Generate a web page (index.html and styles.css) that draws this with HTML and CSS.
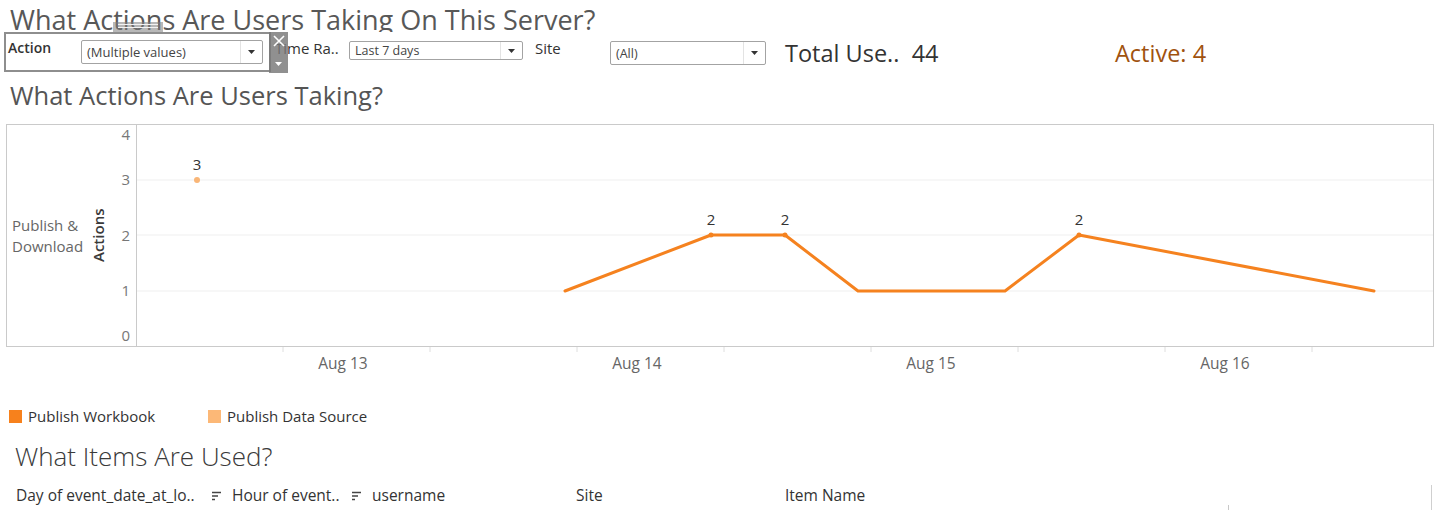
FILE: index.html
```html
<!DOCTYPE html>
<html>
<head>
<meta charset="utf-8">
<title>Server Actions</title>
<link rel="stylesheet" href="styles.css">
</head>
<body>
<div class="dash">
  <h1 class="title">What Actions Are Users Taking On This Server?</h1>

  <div class="filters">
    <div class="filter filter-action">
      <div class="grip"><span></span><span></span></div>
      <span class="flabel flabel-action">Action</span>
      <div class="dd dd-action">
        <span class="dd-text">(Multiple values)</span>
        <span class="dd-arrow"><svg width="7" height="4" viewBox="0 0 7 4"><path d="M0 0h7L3.5 4z" fill="#333"/></svg></span>
      </div>
      <div class="closebar">
        <svg class="close-x" width="12" height="12" viewBox="0 0 12 12"><path d="M1 1L11 11M11 1L1 11" stroke="#fff" stroke-width="1.6"/></svg>
        <svg class="close-down" width="7" height="4" viewBox="0 0 7 4"><path d="M0 0h7L3.5 4z" fill="#fff"/></svg>
      </div>
    </div>

    <div class="filter filter-time">
      <span class="flabel flabel-time">Time Ra..</span>
      <div class="dd dd-time">
        <span class="dd-text dd-text-sm">Last 7 days</span>
        <span class="dd-arrow"><svg width="7" height="4" viewBox="0 0 7 4"><path d="M0 0h7L3.5 4z" fill="#333"/></svg></span>
      </div>
    </div>

    <div class="filter filter-site">
      <span class="flabel flabel-site">Site</span>
      <div class="dd dd-site">
        <span class="dd-text dd-text-sm">(All)</span>
        <span class="dd-arrow"><svg width="7" height="4" viewBox="0 0 7 4"><path d="M0 0h7L3.5 4z" fill="#333"/></svg></span>
      </div>
    </div>

    <div class="kpi kpi-total">Total Use..  44</div>
    <div class="kpi kpi-active">Active: 4</div>
  </div>

  <h2 class="section">What Actions Are Users Taking?</h2>

  <div class="chart">
    <div class="chart-box">
      <div class="left-pane">
        <div class="rowhdr">Publish &amp;<br>Download</div>
        <div class="axistitle">Actions</div>
        <svg class="yaxis" width="28" height="221" viewBox="0 0 28 221">
          <g class="ytick">
            <text x="22" y="15" text-anchor="end">4</text>
            <text x="22" y="60" text-anchor="end">3</text>
            <text x="22" y="116" text-anchor="end">2</text>
            <text x="22" y="171" text-anchor="end">1</text>
            <text x="22" y="216" text-anchor="end">0</text>
          </g>
        </svg>
      </div>
      <svg class="plot" width="1296" height="221" viewBox="0 0 1296 221">
        <g stroke="#efefef" stroke-width="1">
          <line x1="0" y1="55" x2="1296" y2="55"/>
          <line x1="0" y1="110" x2="1296" y2="110"/>
          <line x1="0" y1="166" x2="1296" y2="166"/>
        </g>
        <polyline points="428,166 574,110 648,110 721,166 868,166 942,110 1237,166" fill="none" stroke="#f5821f" stroke-width="3" stroke-linejoin="round" stroke-linecap="round"/>
        <g fill="#f5821f">
          <circle cx="574" cy="110" r="2.5"/>
          <circle cx="648" cy="110" r="2.5"/>
          <circle cx="942" cy="110" r="2.5"/>
        </g>
        <circle cx="60" cy="55" r="3" fill="#f9b677"/>
        <g class="dlabel" text-anchor="middle">
          <text x="60" y="45">3</text>
          <text x="574" y="100">2</text>
          <text x="648" y="100">2</text>
          <text x="942" y="100">2</text>
        </g>
      </svg>
    </div>
    <svg class="xaxis" width="1428" height="33" viewBox="0 0 1428 33">
      <g stroke="#dedede" stroke-width="1">
        <line x1="277" y1="0" x2="277" y2="5"/>
        <line x1="424" y1="0" x2="424" y2="5"/>
        <line x1="571" y1="0" x2="571" y2="5"/>
        <line x1="718" y1="0" x2="718" y2="5"/>
        <line x1="865" y1="0" x2="865" y2="5"/>
        <line x1="1012" y1="0" x2="1012" y2="5"/>
        <line x1="1159" y1="0" x2="1159" y2="5"/>
        <line x1="1306" y1="0" x2="1306" y2="5"/>
      </g>
      <g class="xtick" text-anchor="middle">
        <text x="337" y="22">Aug 13</text>
        <text x="631" y="22">Aug 14</text>
        <text x="925" y="22">Aug 15</text>
        <text x="1219" y="22">Aug 16</text>
      </g>
    </svg>
  </div>

  <div class="legend">
    <div class="legend-item legend-item-first"><span class="swatch swatch-dark"></span>Publish Workbook</div>
    <div class="legend-item"><span class="swatch swatch-light"></span>Publish Data Source</div>
  </div>

  <h2 class="section section-items">What Items Are Used?</h2>

  <div class="table-hdr">
    <div class="th th-day">Day of event_date_at_lo..<span class="sort"><svg width="10" height="10" viewBox="0 0 10 10"><path d="M0 1.5h9M0 5h6M0 8.5h3" stroke="#444" stroke-width="1.3"/></svg></span></div>
    <div class="th th-hour">Hour of event..<span class="sort"><svg width="10" height="10" viewBox="0 0 10 10"><path d="M0 1.5h9M0 5h6M0 8.5h3" stroke="#444" stroke-width="1.3"/></svg></span></div>
    <div class="th th-user">username</div>
    <div class="th th-site">Site</div>
    <div class="th th-item">Item Name</div>
    <div class="th th-gap"></div>
  </div>
</div>
</body>
</html>
```

FILE: styles.css
```css
* { box-sizing: border-box; }

body {
  margin: 0;
  background: #fff;
  font-family: "Open Sans", Lato, sans-serif;
  color: #333;
}

.dash {
  width: 1437px;
  height: 510px;
  overflow: hidden;
}

.title {
  margin: 0;
  padding: 6px 0 0 10px;
  height: 32px;
  font-size: 27px;
  font-weight: 400;
  line-height: 28px;
  color: #585858;
  white-space: nowrap;
}

/* filter row */
.filters {
  position: relative;
  display: flex;
  align-items: flex-start;
  height: 40px;
  padding-left: 4px;
  background: #fff;
}

.filter {
  display: flex;
  align-items: flex-start;
}

.filter-action {
  position: relative;
  width: 267px;
  height: 40px;
  border: 2px solid #8e8e8e;
  padding: 4px 0 0 0;
  background: #fff;
}

.grip {
  position: absolute;
  left: 107px;
  top: -12px;
  width: 50px;
  height: 10px;
  background: rgba(125, 125, 125, 0.55);
  display: flex;
  flex-direction: column;
  align-items: center;
  padding-top: 2px;
  gap: 2px;
}

.grip span {
  display: block;
  width: 40px;
  height: 1px;
  background: #f2f2f2;
}

.closebar {
  position: absolute;
  z-index: 2;
  left: 100%;
  top: -2px;
  width: 19px;
  height: 41px;
  background: rgba(120, 120, 120, 0.82);
  display: flex;
  flex-direction: column;
  align-items: center;
  justify-content: space-between;
  padding: 3px 0 7px;
}

.flabel {
  font-size: 15px;
  line-height: 20px;
  color: #333;
  white-space: nowrap;
}

.flabel-action {
  width: 75px;
  padding-left: 2px;
  font-weight: 600;
  font-size: 14px;
  color: #333;
}

.flabel-time {
  width: 74px;
  margin-top: 6px;
}

.flabel-site {
  width: 75px;
  margin-top: 6px;
}

.dd {
  display: flex;
  align-items: stretch;
  border: 1px solid #a3a3a3;
  border-radius: 2px;
  background: #fff;
}

.dd-text {
  flex: 1;
  padding-left: 5px;
  font-size: 13px;
  color: #444;
  display: flex;
  align-items: center;
  white-space: nowrap;
}

.dd-text-sm {
  font-size: 12.5px;
}

.dd-arrow {
  width: 22px;
  border-left: 1px solid #e3e3e3;
  display: flex;
  align-items: center;
  justify-content: center;
}

.dd-action {
  width: 182px;
  height: 24px;
  margin-top: 2px;
}

.filter-time {
  margin-left: 4px;
}

.dd-time {
  width: 174px;
  height: 19px;
  margin-top: 9px;
}

.filter-site {
  margin-left: 12px;
}

.dd-site {
  width: 156px;
  height: 24px;
  margin-top: 9px;
}

.kpi {
  font-size: 23.5px;
  line-height: 28px;
  margin-top: 7px;
  white-space: pre;
}

.kpi-total {
  margin-left: 19px;
  width: 330px;
  color: #333;
}

.kpi-active {
  color: #a0520f;
}

/* section titles */
.section {
  margin: 7px 0 0;
  padding-left: 10px;
  font-size: 25.5px;
  font-weight: 400;
  line-height: 32px;
  color: #555;
}

/* chart */
.chart {
  margin: 13px 0 0 6px;
}

.chart-box {
  display: flex;
  width: 1428px;
  height: 223px;
  border: 1px solid #cacaca;
}

.left-pane {
  display: flex;
  width: 130px;
  border-right: 1px solid #cacaca;
}

.rowhdr {
  width: 81px;
  padding-left: 5px;
  align-self: center;
  font-size: 15px;
  line-height: 21px;
  color: #666;
}

.axistitle {
  width: 20px;
  display: flex;
  align-items: center;
  justify-content: center;
  writing-mode: vertical-rl;
  transform: rotate(180deg);
  font-size: 15px;
  font-weight: 600;
  color: #3a3a3a;
}

.yaxis, .plot, .xaxis {
  display: block;
}

.ytick text {
  font-family: "Open Sans", Lato, sans-serif;
  font-size: 15px;
  fill: #777;
}

.dlabel text {
  font-family: "Open Sans", Lato, sans-serif;
  font-size: 15px;
  fill: #333;
}

.xtick text {
  font-family: "Open Sans", Lato, sans-serif;
  font-size: 15.5px;
  fill: #666;
}

/* legend */
.legend {
  display: flex;
  margin-top: 28px;
  padding-left: 9px;
  height: 16px;
}

.legend-item {
  display: flex;
  align-items: center;
  gap: 6px;
  font-size: 15px;
  line-height: 16px;
  color: #333;
  white-space: nowrap;
}

.legend-item-first {
  width: 199px;
}

.swatch {
  display: block;
  width: 13px;
  height: 13px;
}

.swatch-dark {
  background: #f7811c;
}

.swatch-light {
  background: #fcb877;
}

.section-items {
  margin-top: 16px;
  padding-left: 15px;
  font-size: 26px;
  font-weight: 300;
  color: #3a3a3a;
}

/* table header */
.table-hdr {
  display: flex;
  margin-top: 13px;
  padding-left: 16px;
  height: 25px;
  font-size: 15.5px;
  line-height: 20px;
  color: #333;
}

.th {
  display: flex;
  align-items: flex-start;
  white-space: nowrap;
}

.sort {
  display: flex;
  margin-top: 6px;
  margin-left: auto;
  width: 20px;
}

.th-day { width: 216px; }
.th-hour { width: 140px; }
.th-user { width: 204px; }
.th-site { width: 209px; }
.th-item {
  width: 444px;
  position: relative;
}

.th-item::after {
  content: "";
  position: absolute;
  right: 0;
  bottom: 0;
  width: 1px;
  height: 5px;
  background: #c8c8c8;
}

.th-gap {
  width: 203px;
  border-right: 1px solid #cfcfcf;
}
```
